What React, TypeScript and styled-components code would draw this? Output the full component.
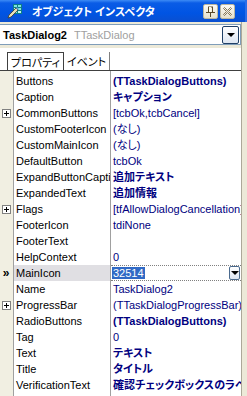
import * as React from 'react';
import styled, { createGlobalStyle } from 'styled-components';

const GlobalStyle = createGlobalStyle`
  html, body {
    margin: 0;
    padding: 0;
    background: #ece9d8;
    overflow: hidden;
  }
`;

const UI_FONT = `"Liberation Sans", "Noto Sans CJK JP", sans-serif`;

const Window = styled.div`
  width: 247px;
  height: 396px;
  display: flex;
  flex-direction: column;
  background: #ece9d8;
  font-family: ${UI_FONT};
  font-size: 11px;
  overflow: hidden;
`;

const TitleBar = styled.div`
  height: 22px;
  flex: none;
  display: flex;
  align-items: center;
  padding: 0 10px 0 7px;
  background: linear-gradient(to bottom, #3d8bf5 0, #0a5ce6 3px, #0054e3 60%, #0a4fd0 100%);
  border-right: 2px solid #2b6de8;
  box-sizing: border-box;
`;

const TitleText = styled.span`
  flex: 1;
  margin-left: 9px;
  color: #ffffff;
  font-weight: bold;
  font-size: 11px;
  font-feature-settings: "palt";
  white-space: nowrap;
`;

const CaptionButton = styled.div`
  width: 15px;
  height: 15px;
  margin-left: 2px;
  box-sizing: border-box;
  border: 1px solid #b9b59f;
  border-radius: 2px;
  background: linear-gradient(to bottom, #fbfaf4, #e5e1cd);
  display: flex;
  align-items: center;
  justify-content: center;
`;

const Content = styled.div`
  flex: 1;
  display: flex;
  min-height: 0;
`;

const Main = styled.div`
  width: 241px;
  display: flex;
  flex-direction: column;
  border-right: 1px solid #aca899;
`;

const ComboRow = styled.div`
  padding: 2px 0 3px 0;
`;

const Combo = styled.div`
  height: 21px;
  box-sizing: border-box;
  display: flex;
  align-items: center;
  background: #ffffff;
  border: 1px solid #7f9db9;
  border-left: none;
  padding-left: 3px;
  white-space: nowrap;
`;

const ComboName = styled.span`
  font-weight: bold;
  color: #000000;
`;

const ComboType = styled.span`
  flex: 1;
  margin-left: 7px;
  color: #a0a0a0;
  overflow: hidden;
`;

const DropButton = styled.div<{ $small?: boolean }>`
  width: ${(p) => (p.$small ? '11px' : '17px')};
  height: ${(p) => (p.$small ? '14px' : '18px')};
  margin-right: 1px;
  box-sizing: border-box;
  border: 1px solid ${(p) => (p.$small ? '#4a6a8e' : '#1f3f66')};
  border-radius: 2px;
  background: linear-gradient(to bottom, #ffffff, #dde6f2);
  display: flex;
  align-items: center;
  justify-content: center;
  flex: none;
`;

const Arrow = styled.div`
  width: 0;
  height: 0;
  border-left: 4px solid transparent;
  border-right: 4px solid transparent;
  border-top: 4px solid #000000;
`;

const TabBar = styled.div`
  height: 22px;
  display: flex;
  align-items: flex-end;
  padding-left: 7px;
  background: #ffffff;
  border-bottom: 1px solid #404040;
`;

const Tab = styled.div<{ $active?: boolean }>`
  height: 18px;
  box-sizing: border-box;
  padding: 0 3px 0 3px;
  display: flex;
  align-items: center;
  font-size: 11px;
  font-feature-settings: "palt";
  color: #000000;
  border-right: 1px solid ${(p) => (p.$active ? '#404040' : '#808080')};
  border-left: ${(p) => (p.$active ? '1px solid #404040' : 'none')};
  border-top: ${(p) => (p.$active ? '1px solid #404040' : 'none')};
  background: #ffffff;
`;

const Grid = styled.div`
  flex: 1;
  display: flex;
  flex-direction: column;
  background: #ffffff;
`;

const Row = styled.div<{ $h?: number; $fill?: boolean }>`
  display: flex;
  height: ${(p) => (p.$fill ? 'auto' : `${p.$h ?? 16}px`)};
  flex: ${(p) => (p.$fill ? 1 : 'none')};
`;

const Gutter = styled.div`
  width: 13px;
  flex: none;
  background: #f1efe2;
  border-right: 1px solid #a0a0a0;
  display: flex;
  align-items: center;
  justify-content: center;
`;

const NameCell = styled.div<{ $selected?: boolean }>`
  width: 94px;
  flex: none;
  padding-left: 2px;
  border-right: 1px solid #a0a0a0;
  background: ${(p) => (p.$selected ? '#e0dfe3' : 'transparent')};
  color: #000000;
  line-height: 16px;
  white-space: nowrap;
  overflow: hidden;
`;

const ValueCell = styled.div<{ $bold?: boolean }>`
  flex: 1;
  min-width: 0;
  padding-left: 2px;
  color: #000080;
  font-weight: ${(p) => (p.$bold ? 'bold' : 'normal')};
  font-feature-settings: "palt";
  line-height: 16px;
  white-space: nowrap;
  overflow: hidden;
`;

const Editor = styled.div`
  flex: 1;
  min-width: 0;
  display: flex;
  align-items: center;
  border-top: 1px dotted #808080;
  border-bottom: 1px dotted #808080;
  box-sizing: border-box;
  padding-left: 1px;
`;

const Selected = styled.span`
  background: #316ac5;
  color: #ffffff;
  line-height: 13px;
  padding: 0 1px;
`;

const EditorText = styled.div`
  flex: 1;
`;

const Plus = styled.div`
  width: 9px;
  height: 9px;
  box-sizing: border-box;
  border: 1px solid #808080;
  background: #ffffff;
  position: relative;
  &::before {
    content: '';
    position: absolute;
    left: 1px;
    top: 3px;
    width: 5px;
    height: 1px;
    background: #000000;
  }
  &::after {
    content: '';
    position: absolute;
    left: 3px;
    top: 1px;
    width: 1px;
    height: 5px;
    background: #000000;
  }
`;

const Marker = styled.span`
  font-size: 12px;
  font-weight: bold;
  color: #000000;
  margin-left: -1px;
`;

const AppIcon = () => (
  <svg width="16" height="16" viewBox="0 0 16 16">
    <rect x="6" y="1" width="9" height="10" fill="#0e7f86" />
    <rect x="7" y="2" width="3" height="2" fill="#7fe6e0" />
    <rect x="11" y="2" width="3" height="2" fill="#7fe6e0" />
    <rect x="7" y="5" width="3" height="2" fill="#bff4f0" />
    <rect x="11" y="5" width="3" height="2" fill="#7fe6e0" />
    <rect x="7" y="8" width="3" height="2" fill="#7fe6e0" />
    <rect x="11" y="8" width="3" height="2" fill="#bff4f0" />
    <path d="M1 15 L2 12 L9 5 L11 7 L4 14 Z" fill="#e8e0b8" stroke="#3a3a30" strokeWidth="0.8" />
    <path d="M9 5 L10 4 L12 6 L11 7 Z" fill="#5aa0d8" />
  </svg>
);

const PinGlyph = () => (
  <svg width="9" height="11" viewBox="0 0 9 11">
    <path d="M2 1 H7 M2.5 1 V6 M6.5 1 V6 M0 6.5 H9 M4.5 7 V11" stroke="#5a4a2a" strokeWidth="1" fill="none" />
    <rect x="3" y="1" width="2" height="5" fill="#fffbe8" />
  </svg>
);

const CloseGlyph = () => (
  <svg width="9" height="9" viewBox="0 0 9 9">
    <path d="M0.5 1.5 L1.5 0.5 L4.5 3.5 L7.5 0.5 L8.5 1.5 L5.5 4.5 L8.5 7.5 L7.5 8.5 L4.5 5.5 L1.5 8.5 L0.5 7.5 L3.5 4.5 Z" fill="none" stroke="#6b5a3a" strokeWidth="0.8" />
  </svg>
);

type Prop = {
  name: string;
  value: string;
  bold?: boolean;
  expandable?: boolean;
  selected?: boolean;
};

const props: Prop[] = [
  { name: 'Buttons', value: '(TTaskDialogButtons)', bold: true },
  { name: 'Caption', value: 'キャプション', bold: true },
  { name: 'CommonButtons', value: '[tcbOk,tcbCancel]', expandable: true },
  { name: 'CustomFooterIcon', value: '(なし)' },
  { name: 'CustomMainIcon', value: '(なし)' },
  { name: 'DefaultButton', value: 'tcbOk' },
  { name: 'ExpandButtonCaption', value: '追加テキスト', bold: true },
  { name: 'ExpandedText', value: '追加情報', bold: true },
  { name: 'Flags', value: '[tfAllowDialogCancellation]', expandable: true },
  { name: 'FooterIcon', value: 'tdiNone' },
  { name: 'FooterText', value: '' },
  { name: 'HelpContext', value: '0' },
  { name: 'MainIcon', value: '32514', selected: true },
  { name: 'Name', value: 'TaskDialog2' },
  { name: 'ProgressBar', value: '(TTaskDialogProgressBar)', expandable: true },
  { name: 'RadioButtons', value: '(TTaskDialogButtons)', bold: true },
  { name: 'Tag', value: '0' },
  { name: 'Text', value: 'テキスト', bold: true },
  { name: 'Title', value: 'タイトル', bold: true },
  { name: 'VerificationText', value: '確認チェックボックスのラベル', bold: true },
];

const PropRow = ({ item }: { item: Prop }) => (
  <Row>
    <Gutter>
      {item.expandable && <Plus />}
      {item.selected && <Marker>»</Marker>}
    </Gutter>
    <NameCell $selected={item.selected}>{item.name}</NameCell>
    {item.selected ? (
      <Editor>
        <EditorText>
          <Selected>{item.value}</Selected>
        </EditorText>
        <DropButton $small>
          <Arrow />
        </DropButton>
      </Editor>
    ) : (
      <ValueCell $bold={item.bold}>{item.value}</ValueCell>
    )}
  </Row>
);

const App = () => (
  <Window>
    <GlobalStyle />
    <TitleBar>
      <AppIcon />
      <TitleText>オブジェクト インスペクタ</TitleText>
      <CaptionButton>
        <PinGlyph />
      </CaptionButton>
      <CaptionButton>
        <CloseGlyph />
      </CaptionButton>
    </TitleBar>
    <Content>
      <Main>
        <ComboRow>
          <Combo>
            <ComboName>TaskDialog2</ComboName>
            <ComboType>TTaskDialog</ComboType>
            <DropButton>
              <Arrow />
            </DropButton>
          </Combo>
        </ComboRow>
        <TabBar>
          <Tab $active>プロパティ</Tab>
          <Tab>イベント</Tab>
        </TabBar>
        <Grid>
          <Row $h={2}>
            <Gutter />
            <NameCell />
            <ValueCell />
          </Row>
          {props.map((p) => (
            <PropRow key={p.name} item={p} />
          ))}
          <Row $fill>
            <Gutter />
            <NameCell />
            <ValueCell />
          </Row>
        </Grid>
      </Main>
    </Content>
  </Window>
);

export default App;
